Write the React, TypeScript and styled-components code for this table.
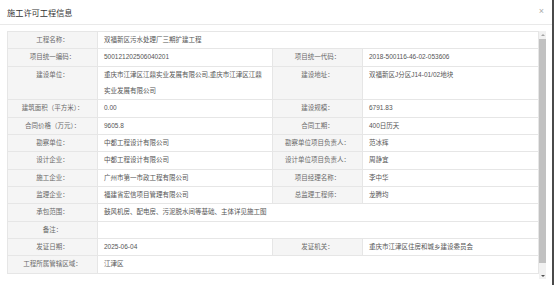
import styled, { createGlobalStyle } from 'styled-components';

const GlobalStyle = createGlobalStyle`
    html, body {
        margin: 0;
        padding: 0;
        background: #fff;
    }
    body {
        font-family: "Liberation Sans", "Noto Sans CJK SC", sans-serif;
    }
`;

const StyledModal = styled.div`
    width: 554px;
    height: 285px;
    box-sizing: border-box;
    overflow: hidden;
    background: #fff;
    border-right: 2px solid #4a4a4a;
    display: flex;
    flex-direction: column;
`;

const StyledHeader = styled.div`
    height: 25px;
    flex: none;
    box-sizing: border-box;
    border-bottom: 1px solid #e9e9e9;
    padding: 0 7px;
    display: flex;
    align-items: center;
    justify-content: space-between;
`;

const StyledTitle = styled.div`
    font-size: 8.2px;
    color: #333;
    font-family: "Noto Sans CJK SC", sans-serif;
`;

const StyledClose = styled.span`
    font-size: 9px;
    color: #aaa;
    margin-right: 1px;
    margin-top: -2px;
`;

const StyledBody = styled.div`
    flex: 1;
    display: flex;
    padding: 6px 0 0 7px;
    gap: 1px;
    min-height: 0;
`;

const StyledContent = styled.div`
    width: 531px;
    flex: none;
`;

const StyledTable = styled.table`
    width: 531px;
    border-collapse: collapse;
    table-layout: fixed;
    font-family: "Liberation Sans", "Noto Sans CJK SC", sans-serif;
    font-size: 6.5px;
`;

const StyledLabel = styled.td`
    background: #f5f5f5;
    color: #6a6a6a;
    text-align: center;
    vertical-align: top;
    line-height: 16.35px;
    padding: 0;
    border: 1px solid #e6e6e6;
    white-space: nowrap;
`;

const StyledValue = styled.td`
    background: #fff;
    color: #555;
    vertical-align: top;
    line-height: 16.35px;
    padding: 0 6px;
    border: 1px solid #e6e6e6;
    word-break: break-all;
`;

const StyledLinkRow = styled.div`
    text-align: center;
    padding-top: 4px;
`;

const StyledLink = styled.a`
    font-size: 6.5px;
    color: #3a7fc0;
    font-family: "Noto Sans CJK SC", sans-serif;
    text-decoration: none;
`;

const StyledScrollbar = styled.div`
    width: 7px;
    height: 248px;
    flex: none;
    background: #f1f1f1;
    display: flex;
    flex-direction: column;
`;

const StyledScrollButton = styled.div<{ $down?: boolean }>`
    height: 7px;
    flex: none;
    display: flex;
    align-items: center;
    justify-content: center;

    &::before {
        content: '';
        width: 0;
        height: 0;
        border-left: 2px solid transparent;
        border-right: 2px solid transparent;
        ${(p) => (p.$down ? 'border-top: 2px solid #505050;' : 'border-bottom: 2px solid #a3a3a3;')}
    }
`;

const StyledThumb = styled.div`
    margin: 1px 0 0;
    height: 224px;
    background: #c1c1c1;
`;

const StyledTrack = styled.div`
    flex: 1;
`;

type Row =
    | { kind: 'wide'; label: string; value: string }
    | { kind: 'pair'; label: string; value: string; label2: string; value2: string };

const rows: Row[] = [
    { kind: 'wide', label: '工程名称：', value: '双福新区污水处理厂三期扩建工程' },
    {
        kind: 'pair',
        label: '项目统一编码：',
        value: '500121202506040201',
        label2: '项目统一代码：',
        value2: '2018-500116-46-02-053606',
    },
    {
        kind: 'pair',
        label: '建设单位：',
        value: '重庆市江津区江鼎实业发展有限公司,重庆市江津区江鼎实业发展有限公司',
        label2: '建设地址：',
        value2: '双福新区J分区J14-01/02地块',
    },
    { kind: 'pair', label: '建筑面积（平方米）：', value: '0.00', label2: '建设规模：', value2: '6791.83' },
    { kind: 'pair', label: '合同价格（万元）：', value: '9605.8', label2: '合同工期：', value2: '400日历天' },
    {
        kind: 'pair',
        label: '勘察单位：',
        value: '中都工程设计有限公司',
        label2: '勘察单位项目负责人：',
        value2: '范冰辉',
    },
    {
        kind: 'pair',
        label: '设计企业：',
        value: '中都工程设计有限公司',
        label2: '设计单位项目负责人：',
        value2: '周静宜',
    },
    {
        kind: 'pair',
        label: '施工企业：',
        value: '广州市第一市政工程有限公司',
        label2: '项目经理名称：',
        value2: '李中华',
    },
    {
        kind: 'pair',
        label: '监理企业：',
        value: '福建省宏信项目管理有限公司',
        label2: '总监理工程师：',
        value2: '龙腾均',
    },
    { kind: 'wide', label: '承包范围：', value: '鼓风机房、配电房、污泥脱水间等基础、主体详见施工图' },
    { kind: 'wide', label: '备注：', value: '' },
    {
        kind: 'pair',
        label: '发证日期：',
        value: '2025-06-04',
        label2: '发证机关：',
        value2: '重庆市江津区住房和城乡建设委员会',
    },
    { kind: 'wide', label: '工程所属管辖区域：', value: '江津区' },
];

export default function App() {
    return (
        <>
            <GlobalStyle />
            <StyledModal>
                <StyledHeader>
                    <StyledTitle>施工许可工程信息</StyledTitle>
                    <StyledClose>×</StyledClose>
                </StyledHeader>
                <StyledBody>
                    <StyledContent>
                        <StyledTable>
                            <colgroup>
                                <col style={{ width: 90 }} />
                                <col style={{ width: 175 }} />
                                <col style={{ width: 90 }} />
                                <col style={{ width: 176 }} />
                            </colgroup>
                            <tbody>
                                {rows.map((row) =>
                                    row.kind === 'wide' ? (
                                        <tr key={row.label}>
                                            <StyledLabel>{row.label}</StyledLabel>
                                            <StyledValue colSpan={3}>{row.value || '\u00a0'}</StyledValue>
                                        </tr>
                                    ) : (
                                        <tr key={row.label}>
                                            <StyledLabel>{row.label}</StyledLabel>
                                            <StyledValue>{row.value}</StyledValue>
                                            <StyledLabel>{row.label2}</StyledLabel>
                                            <StyledValue>{row.value2}</StyledValue>
                                        </tr>
                                    ),
                                )}
                            </tbody>
                        </StyledTable>
                        <StyledLinkRow>
                            <StyledLink href="#">点击查看附件信息</StyledLink>
                        </StyledLinkRow>
                    </StyledContent>
                    <StyledScrollbar>
                        <StyledScrollButton />
                        <StyledThumb />
                        <StyledTrack />
                        <StyledScrollButton $down />
                    </StyledScrollbar>
                </StyledBody>
            </StyledModal>
        </>
    );
}
